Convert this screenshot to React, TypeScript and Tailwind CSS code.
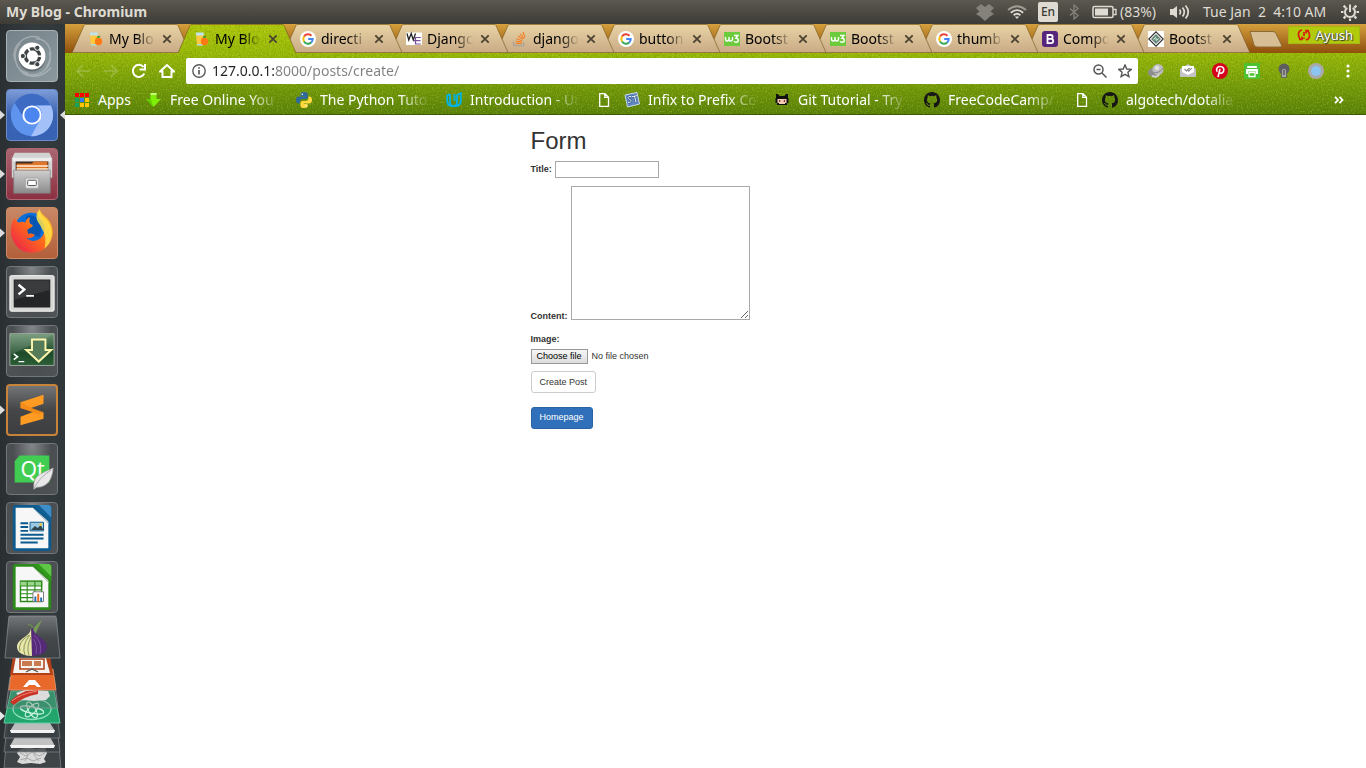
import React from "react";

/* ---------- textures ---------- */

function Noise({ id, frequency, strength }: { id: string; frequency: string; strength: number }) {
  const matrix = `0 0 0 0 0.12  0 0 0 0 0.2  0 0 0 0 0  ${strength} 0 0 0 ${-strength * 0.5}`;
  const light = `0 0 0 0 0.8  0 0 0 0 0.9  0 0 0 0 0.1  0 ${strength} 0 0 ${-strength * 0.5}`;
  return (
    <svg className="pointer-events-none absolute inset-0 h-full w-full" aria-hidden="true">
      <filter id={`${id}-dark`} x="0" y="0" width="100%" height="100%">
        <feTurbulence type="fractalNoise" baseFrequency={frequency} numOctaves="1" seed="4" />
        <feColorMatrix values={matrix} />
      </filter>
      <filter id={`${id}-light`} x="0" y="0" width="100%" height="100%">
        <feTurbulence type="fractalNoise" baseFrequency={frequency} numOctaves="1" seed="9" />
        <feColorMatrix values={light} />
      </filter>
      <rect width="100%" height="100%" filter={`url(#${id}-dark)`} />
      <rect width="100%" height="100%" filter={`url(#${id}-light)`} opacity="0.6" />
    </svg>
  );
}

/* ---------- favicons ---------- */

const Juice = () => (
  <svg viewBox="0 0 16 16" className="size-4">
    <path d="M2 3h7.500l-.8 11.500H3z" fill="#ffc83d" />
    <path d="M1.800 1.500h8l-.2 3H2.200z" fill="#bfe3ee" />
    <path d="M3 14.500h5.800V13H2.900z" fill="#a9d8e6" />
    <circle cx="10.500" cy="10.500" r="3.700" fill="#ff7a14" />
    <path d="M8.500 6.500c1-2 3-2 4-1-1 1.500-2.500 1.800-4 1z" fill="#3f9b2f" />
  </svg>
);
const Google = () => (
  <svg viewBox="0 0 16 16" className="size-4">
    <circle cx="8" cy="8" r="8" fill="#fff" />
    <g fill="none" strokeWidth="2">
      <path d="M11.500 4.700A4.700 4.700 0 0 0 4 5.500" stroke="#ea4335" />
      <path d="M4 5.500a4.800 4.800 0 0 0 0 5" stroke="#fbbc05" />
      <path d="M4 10.500a4.700 4.700 0 0 0 7.200.9" stroke="#34a853" />
      <path d="M11.200 11.400A4.600 4.600 0 0 0 12.700 8H8.200" stroke="#4285f4" />
    </g>
  </svg>
);
const WE = () => (
  <svg viewBox="0 0 16 16" className="size-4">
    <path fill="#fff" d="M0 1.500h16v12.500H0z" />
    <path d="M1 2.500l1.800 6.500 2.400-6.500L7.300 9l2.200-6.500" fill="none" stroke="#222" strokeWidth="1.300" />
    <path d="M14.800 6.500H9.500V13h5.300M8 9.700h6.500" fill="none" stroke="#7a4f9c" strokeWidth="1.200" />
  </svg>
);
const Stack = () => (
  <svg viewBox="0 0 16 16" className="size-4">
    <path d="M1.500 10.500v4h10v-4" fill="none" stroke="#aaa39a" strokeWidth="1.300" />
    <path d="M3.500 12.500h6.200M3.700 10.300l6 .8M4.500 7.700l5.700 2M6 5l5 3.300M8.200 2.800l3.700 4.700M11 1l2 5.700" stroke="#f48024" strokeWidth="1.200" />
  </svg>
);
const W3 = () => (
  <svg viewBox="0 0 16 16" className="size-4">
    <path fill="#6ccb3c" d="M0 1h16v14H0z" />
    <path d="M1.500 6v2q0 2 1.700 2T5 8V6v2q0 2 1.700 2T8.500 8V6M10 4.500h4L12 7.200q2.300.1 2.300 2T12 11.300q-1.500 0-2-1" fill="none" stroke="#fff" strokeWidth="1.400" />
  </svg>
);
const BootstrapIcon = () => (
  <svg viewBox="0 0 16 16" className="size-4">
    <rect width="16" height="16" rx="3" fill="#56257c" />
    <path d="M5.500 4h3.200a1.900 1.900 0 0 1 0 3.900H5.500zm0 3.900h3.600a2.100 2.100 0 0 1 0 4.200H5.500z" fill="none" stroke="#fff" strokeWidth="1.800" />
  </svg>
);
const Diamond = () => (
  <svg viewBox="0 0 16 16" className="size-4">
    <path fill="#fff" d="M0 0h16v16H0z" />
    <path d="M8 .8L15.200 8 8 15.200.8 8z" fill="none" stroke="#333" strokeWidth="1.200" />
    <path d="M8 3.500L12.500 8 8 12.500 3.500 8z" fill="#6b9480" stroke="#444" strokeWidth=".6" />
    <path d="M5.500 8.500l2-2 1 3 2-2" fill="none" stroke="#d5eadf" />
  </svg>
);

/* ---------- bookmark icons ---------- */

const appColors = ["#f00", "#f00", "#f00", "#19a15f", "#2f7cf6", "#ffc600", "#19a15f", "#ffc600", "#ffc600"];
const AppsIcon = () => (
  <svg viewBox="0 0 16 16" className="size-4">
    {appColors.map((c, i) => (
      <rect key={i} x={1 + (i % 3) * 5} y={1 + Math.floor(i / 3) * 5} width="4" height="4" fill={c} />
    ))}
  </svg>
);
const DownIcon = () => (
  <svg viewBox="0 0 16 16" className="size-4">
    <path d="M4.500 1h6v6h4.500l-7.500 8L0 7h4.500z" fill="#7fee08" />
    <path d="M4.500 1h6v2h-6z" fill="#c6ff77" />
    <path d="M7.500 15L0 7h4.500" fill="#5ecb00" />
  </svg>
);
const Python = () => (
  <svg viewBox="0 0 16 16" className="size-4">
    <path d="M8 0C5 0 4.500 1 4.500 2.300V4h4v.6H2.600C1 4.600 0 5.800 0 8s1 3.600 2.300 3.600h1.500V9.500C3.800 8 5 7 6.300 7h3.500c1.200 0 2-1 2-2.100V2.300C11.800.8 10.500 0 8 0z" fill="#2f689d" />
    <path d="M8.200 16c3 0 3.500-1 3.500-2.300V12h-4v-.6h5.800c1.600 0 2.500-1.200 2.500-3.400s-1-3.600-2.200-3.600h-1.400v2.100C12.400 8 11.200 9 9.900 9H6.400c-1.200 0-2 1-2 2.100v2.600c0 1.500 1.300 2.300 3.800 2.300z" fill="#ffd93e" />
    <circle cx="6.300" cy="2.200" r=".8" fill="#fff" />
    <circle cx="10" cy="13.800" r=".8" fill="#fff" />
  </svg>
);
const Udacity = () => (
  <svg viewBox="0 0 16 16" className="size-4" fill="none" stroke="#02b3e4" strokeWidth="1.900">
    <path d="M4 2L1.200 3.500v5.200c0 3 1.800 5.300 5 5.300M4 2v8c0 2.500 1.200 4 3.300 4s3.700-1.600 3.700-4V3.200l3.800-2V9c0 3.300-2.500 5-6.500 5.200" />
    <path d="M8.500 2v7" />
  </svg>
);
const FileIcon = () => (
  <svg viewBox="0 0 16 16" className="size-4" fill="none" stroke="#fff" strokeWidth="1.300">
    <path d="M3.700 1.700H9l3.500 3.500v9.100H3.700zM8.800 1.700v3.700h3.700" />
  </svg>
);
const STIcon = () => (
  <svg viewBox="0 0 16 16" className="size-4">
    <path d="M1 3l12-2.500 2.500 11.500-12 3z" fill="#5f87bd" stroke="#c8d7ea" />
    <path d="M7 4.500C3.500 4 3 6.500 5.500 7.300S7.500 11 4 10.300M8 4.500l5-.8M10.500 4.200L12 10" fill="none" stroke="#254a86" strokeWidth="2" />
    <path d="M7 4.500C3.500 4 3 6.500 5.500 7.300S7.500 11 4 10.300M8 4.500l5-.8M10.500 4.200L12 10" fill="none" stroke="#fff" />
  </svg>
);
const Octocat = () => (
  <svg viewBox="0 0 16 16" className="size-4">
    <path d="M2 2h2l1.500 2h5L12 2h2v4h.5v5H13v2H3v-2H1.500V6H2z" fill="#111" />
    <path d="M3.500 7h9v4h-1.500v1H5v-1H3.500z" fill="#f4cbb2" />
    <path d="M5 8h1.200v2H5zM9.800 8H11v2H9.800z" fill="#6d3b2f" />
  </svg>
);
const GitHub = () => (
  <svg viewBox="0 0 16 16" className="size-4">
    <path
      fill="#161616"
      d="M8 0C3.580 0 0 3.580 0 8c0 3.540 2.290 6.530 5.470 7.590.4.070.55-.17.55-.38 0-.19-.01-.82-.01-1.490-2.010.37-2.530-.49-2.690-.94-.09-.23-.48-.94-.82-1.130-.28-.15-.68-.52-.01-.53.63-.01 1.080.58 1.230.82.72 1.210 1.870.87 2.330.66.07-.52.28-.87.51-1.070-1.780-.2-3.640-.89-3.640-3.950 0-.87.31-1.590.82-2.150-.08-.2-.36-1.020.08-2.120 0 0 .67-.21 2.200.82a7.600 7.600 0 0 1 4 0c1.530-1.040 2.200-.82 2.200-.82.44 1.100.16 1.920.08 2.120.51.56.82 1.270.82 2.150 0 3.070-1.870 3.750-3.650 3.950.29.25.54.73.54 1.480 0 1.070-.01 1.930-.01 2.200 0 .21.15.46.55.38A8 8 0 0 0 16 8c0-4.420-3.580-8-8-8z"
    />
  </svg>
);

/* ---------- browser data ---------- */

const tabs: { label: string; icon: () => React.ReactElement; active?: boolean; layer: string }[] = [
  { label: "My Blog", icon: Juice, layer: "z-[11]" },
  { label: "My Blog", icon: Juice, active: true, layer: "z-20" },
  { label: "directi", icon: Google, layer: "z-10" },
  { label: "Django", icon: WE, layer: "z-[9]" },
  { label: "django", icon: Stack, layer: "z-[8]" },
  { label: "button", icon: Google, layer: "z-[7]" },
  { label: "Bootst", icon: W3, layer: "z-[6]" },
  { label: "Bootst", icon: W3, layer: "z-[5]" },
  { label: "thumb", icon: Google, layer: "z-[4]" },
  { label: "Compo", icon: BootstrapIcon, layer: "z-[3]" },
  { label: "Bootst", icon: Diamond, layer: "z-[2]" },
];

const bookmarks: { label?: string; icon: () => React.ReactElement }[] = [
  { label: "Free Online You", icon: DownIcon },
  { label: "The Python Tuto", icon: Python },
  { label: "Introduction - Uc", icon: Udacity },
  { icon: FileIcon },
  { label: "Infix to Prefix Co", icon: STIcon },
  { label: "Git Tutorial - Try", icon: Octocat },
  { label: "FreeCodeCamp/", icon: GitHub },
  { icon: FileIcon },
  { label: "algotech/dotalia", icon: GitHub },
];

function Tab({ tab }: { tab: (typeof tabs)[number] }) {
  const Icon = tab.icon;
  return (
    <li className={`relative -mr-3 flex h-[29px] w-[118px] shrink-0 items-center pl-4 ${tab.layer}`}>
      <svg className="absolute inset-0 h-full w-full" viewBox="0 0 118 29" aria-hidden="true">
        <path d="M0 29L12 1.500Q12.500.5 14 .5H104Q105.500.5 106 1.500L118 29z" fill={tab.active ? "url(#tab-on)" : "url(#tab-off)"} />
        {tab.active && (
          <g clipPath="url(#tab-clip)">
            <rect width="118" height="29" filter="url(#toolbar-dark)" />
            <rect width="118" height="29" filter="url(#toolbar-light)" opacity="0.6" />
          </g>
        )}
        <path
          d={tab.active ? "M0 29L12 1.500Q12.500.5 14 .5H104Q105.500.5 106 1.500L118 29" : "M0 28.500L12 1.500Q12.500.5 14 .5H104Q105.500.5 106 1.500L118 28.500z"}
          fill="none"
          stroke="#7a5a20"
          strokeOpacity=".65"
        />
      </svg>
      <a href="#tab" className="relative flex items-center gap-[5px] text-black">
        <Icon />
        <span className="w-[46px] overflow-hidden whitespace-nowrap text-[14px] leading-5 [mask-image:linear-gradient(to_right,black_60%,transparent)]">{tab.label}</span>
      </a>
      <button aria-label="Close tab" className="relative ml-[7px]">
        <svg viewBox="0 0 10 10" className="size-[10px]" stroke="#4c4433" strokeWidth="1.800">
          <path d="M1.300 1.300l7.400 7.400M8.700 1.300L1.300 8.700" />
        </svg>
      </button>
    </li>
  );
}

/* ---------- system bar ---------- */

function SystemBar() {
  return (
    <header className="flex h-6 items-center bg-linear-to-b from-[#5b5850] to-[#3e3c37] pr-[7px] pl-[6px] text-[14px] leading-5 whitespace-nowrap text-[#dfdbd2]">
      <h1 className="flex-1 text-[14px] font-bold">My Blog - Chromium</h1>
      <svg viewBox="0 0 18 17" className="h-[17px] w-[18px]" fill="#85827b">
        <path d="M5 0l4 3 4-3 5 4-3.500 3.500L18 10l-4 2.500L9 17l-5-4.500L0 10l3.500-2.500L0 4z" />
      </svg>
      <svg viewBox="0 0 20 14" className="ml-[13px] h-[14px] w-5" fill="none" stroke="#dfdbd2" strokeWidth="1.800">
        <path d="M1 5Q10-2.500 19 5" strokeOpacity=".55" />
        <path d="M3.800 7.800q6.200-5.300 12.400 0M6.600 10.200q3.400-2.800 6.800 0" />
        <path d="M7.800 11.400h4.400L10 14z" fill="#dfdbd2" stroke="none" />
      </svg>
      <span className="ml-[11px] flex size-5 items-center justify-center rounded-xs bg-[#dfdbd2] text-[12px] font-medium text-[#3c3b37]">En</span>
      <svg viewBox="0 0 10 16" className="ml-[11px] h-4 w-[10px]" fill="none" stroke="#85827b" strokeWidth="1.300">
        <path d="M1 4.500l8 7L5 15V1l4 3.500-8 7" />
      </svg>
      <svg viewBox="0 0 25 14" className="ml-[13px] h-[14px] w-[25px]">
        <rect x="1" y="1.500" width="20" height="11" rx="1.500" fill="none" stroke="#dfdbd2" strokeWidth="1.500" />
        <path d="M3 3.500h13v7H3z" fill="#dfdbd2" />
        <path d="M22 4.500h2v5h-2" fill="none" stroke="#dfdbd2" strokeWidth="1.300" />
      </svg>
      <span className="ml-[3px] w-[39px]">(83%)</span>
      <svg viewBox="0 0 20 16" className="ml-[11px] h-4 w-5" fill="none" stroke="#dfdbd2" strokeWidth="1.700">
        <path d="M0 5h3l4-3v12l-4-3H0z" fill="#dfdbd2" stroke="none" />
        <path d="M9.500 5.500q2 2.500 0 5M12.500 3.500q3.600 4.500 0 9M15.500 1.500q5.500 6.500 0 13" />
      </svg>
      <time className="ml-[13px] w-[126px] whitespace-pre">Tue Jan  2  4:10 AM</time>
      <svg viewBox="0 0 18 18" className="ml-3 size-[18px]" fill="none" stroke="#dfdbd2">
        <path d="M6.300 4.800a5 5 0 1 0 5.400 0" strokeWidth="2" />
        <path d="M9 1.500V9" strokeWidth="2" />
        <path d="M0 9h2.500M15.500 9H18M2.600 2.600l2 2M13.400 4.600l2-2M2.600 15.400l2-2M13.400 13.400l2 2M9 15.500V18" strokeWidth="2.200" />
      </svg>
    </header>
  );
}

/* ---------- launcher ---------- */

const Ubuntu = () => (
  <svg viewBox="0 0 52 52" className="size-full">
    <g fill="none" stroke="#fff" strokeOpacity=".28" strokeWidth="1.500">
      <path d="M8 30C4 14 20 2 34 7M44 22c5 15-10 28-25 22M30 8c14 0 20 16 11 30M22 44C8 42 4 24 14 12M12 38C16 48 34 52 46 38" />
    </g>
    <circle cx="26" cy="28" r="14" fill="#000" opacity=".25" />
    <circle cx="26" cy="26" r="14" fill="#fff" />
    <circle cx="26.500" cy="26" r="7.500" fill="none" stroke="#3e4346" strokeWidth="3.400" strokeDasharray="13.700 2" strokeDashoffset="-1" />
    <g fill="#3e4346" stroke="#fff" strokeWidth="1">
      <circle cx="16.500" cy="26" r="2.700" />
      <circle cx="31.500" cy="17.400" r="2.700" />
      <circle cx="31.500" cy="34.600" r="2.700" />
    </g>
  </svg>
);
const Chromium = () => (
  <svg viewBox="0 0 52 52" className="size-full">
    <circle cx="26" cy="26" r="22" fill="#5e93ee" />
    <path d="M26 4a22 22 0 0 1 19.500 12H26a10 10 0 0 0-9 6l1 8L8 13.500A22 22 0 0 1 26 4z" fill="#3d6bc4" />
    <path d="M45.500 16A22 22 0 0 1 25 48l9.500-17a10 10 0 0 0-4.500-15z" fill="#a3c1f8" />
    <circle cx="26" cy="26" r="10" fill="#fff" />
    <circle cx="26" cy="26" r="8" fill="#4a86ee" />
  </svg>
);
const Files = () => (
  <svg viewBox="0 0 52 52" className="size-full">
    <path d="M8 4h36l3 6v20H5V10z" fill="#d2d2d2" />
    <path d="M6 9h40v4H6z" fill="#ececec" />
    <path d="M9 13h34v11H9z" fill="#3d2b22" />
    <path d="M10 15h16l2-2h14v11H10z" fill="#e0752c" />
    <path d="M10 17h33v1.500H10zM10 20h33v1.500H10z" fill="#fff0d8" />
    <path d="M7 22h38v24H7z" fill="url(#steel)" stroke="#7d7d7d" strokeWidth=".7" />
    <rect x="19" y="30" width="14" height="11" rx="2" fill="#e0e0e0" stroke="#a0a0a0" />
    <rect x="21.500" y="32.500" width="9" height="5.500" rx="1" fill="#fff" stroke="#555" />
  </svg>
);
const Firefox = () => (
  <svg viewBox="0 0 52 52" className="size-full">
    <circle cx="25" cy="22" r="17" fill="#0a6fd8" />
    <path d="M20 8q10-2 17 8l-3 14-12-2-3-10z" fill="#0856b4" />
    <path
      d="M8 10c1 3 2 4 4 5 2-1 5-1 7 0 1-3 3-5 5-5-1 2-1 4 0 6l3 2c-1 3-5 3-6 5l1 4c3-1 5 0 7 1-2 3-6 4-9 3 6 6 15 3 18-4 3-7 0-13-5-17-2-3-2-6 1-9 1 6 8 8 11 14 5 9 3 20-6 27-11 8-26 5-32-7C2 26 4 17 8 10z"
      fill="url(#fox)"
    />
    <path d="M34 2c1 6 7 8 10 14 5 9 3 20-5 26 2-9 1-15-3-21-1-3-4-6-5-9-1-4 0-8 3-10z" fill="#ffe14a" opacity=".85" />
  </svg>
);
const Terminal = () => (
  <svg viewBox="0 0 52 52" className="size-full">
    <rect x="3" y="9" width="46" height="37" rx="1.500" fill="#d6d6d4" stroke="#fafafa" />
    <path d="M7 13h38v29H7z" fill="#242526" />
    <path d="M8 14h36v10L8 34z" fill="#fff" opacity=".1" />
    <path d="M12 18.500l6 5-6 5" fill="none" stroke="#fff" strokeWidth="2.500" />
    <path d="M20 30h8" stroke="#fff" strokeWidth="2" />
  </svg>
);
const Install = () => (
  <svg viewBox="0 0 52 52" className="size-full">
    <path d="M3 8h46v33H3z" fill="url(#forest)" stroke="#b8c2b8" strokeWidth=".8" />
    <path d="M4 9h44L4 30z" fill="#fff" opacity=".13" />
    <path d="M7 29l4 3-4 3" fill="none" stroke="#fff" strokeWidth="1.600" />
    <path d="M12 37h6" stroke="#fff" strokeWidth="1.300" />
    <path d="M26 14h14v11h6L33 37 20 25h6z" fill="#567b59" stroke="#fff6ad" strokeWidth="2" />
  </svg>
);
const Sublime = () => (
  <svg viewBox="1 1 50 50" className="size-full">
    <path d="M14 18l24-8v9.500L25 24l13 4.500v6.500l-24 7v-9l13-5-13-4z" fill="#ff9a22" />
    <path d="M14 18v6l18 6.500 6-2v-.5l-12-4z" fill="#e87f10" opacity=".55" />
  </svg>
);
const Qt = () => (
  <svg viewBox="0 0 52 52" className="size-full">
    <path d="M13 12h31v28H8V18z" fill="#41cd52" />
    <text x="14" y="34" fontFamily="Noto Sans, sans-serif" fontSize="22" fill="#fff">Qt</text>
    <path d="M28 47c-1-14 5-15 20-22-1 12-6 20-17 20z" fill="#e8e8e8" stroke="#a5a5a5" strokeWidth=".7" />
    <path d="M28 47c4-9 9-14 18-20" fill="none" stroke="#aaa" />
  </svg>
);
const Doc = ({ green }: { green?: boolean }) => (
  <svg viewBox="0 0 52 52" className="size-full">
    <path d="M8 2h36l2 2v44l-2 2H8l-2-2V4z" fill={green ? "#2c8a1b" : "#0d5a8f"} />
    <path d="M9 5h18l16 16v26H9z" fill="#f7f7f7" />
    <path d="M27 5v0l16 16V19z" fill="#cfcfcf" />
    <path d="M28 2h16l2 2v16z" fill={green ? "#2f9a1c" : "#125f94"} />
    <path d="M33 2h11l2 2v11z" fill={green ? "#5fc545" : "#3d8dc8"} />
    {green ? (
      <>
        <path d="M14 20h22v21H14z" fill="#fff" stroke="#2c8a1b" strokeWidth="1.500" />
        <path d="M14 20h22v5H14z" fill="#9bd48c" />
        <path d="M14 20h22v5H14M14 25h22M14 29h22M14 33h22M14 37h22M21 20v21M29 20v21" fill="none" stroke="#2c8a1b" strokeWidth="1.200" />
        <path d="M27 31h11v10H27z" fill="#fff" stroke="#777" />
        <path d="M28.500 36h2v5h-2z" fill="#2370b8" />
        <path d="M31.500 33h2v8h-2z" fill="#e66a26" />
        <path d="M34.500 37h2v4h-2z" fill="#2370b8" />
      </>
    ) : (
      <>
        <path d="M14 21h8M14 25h8M14 29h8M14 33h24M14 37h24M14 41h18" stroke="#0d5a8f" strokeWidth="2" />
        <path d="M24 20h14v9H24z" fill="#9bc9e5" stroke="#0d5a8f" />
        <path d="M25 28l4-4 3 2 3-3 3 5z" fill="#31444f" />
        <circle cx="35" cy="22.500" r="1.500" fill="#f2c73a" />
      </>
    )}
  </svg>
);
const Calc = () => <Doc green />;

const graphite = "border-[#73777b] bg-[radial-gradient(ellipse_at_50%_0%,#85888b,#4b4e51_55%,#505356)]";
const launchers: { name: string; icon: () => React.ReactElement; tile: string; running?: boolean; focused?: boolean }[] = [
  { name: "Search", icon: Ubuntu, tile: "border-[#a9b2b6] bg-linear-to-br from-[#758289] to-[#8b989e]" },
  { name: "Chromium", icon: Chromium, tile: "border-[#6d8ccb] bg-linear-to-b from-[#7d9bd8] via-[#3a62b0] to-[#3763b5]", running: true, focused: true },
  { name: "Files", icon: Files, tile: "border-[#b06873] bg-linear-to-b from-[#a96671] to-[#8b3042]", running: true },
  { name: "Firefox", icon: Firefox, tile: "border-[#cf8b67] bg-linear-to-b from-[#c98866] to-[#b2603a]", running: true },
  { name: "Terminal", icon: Terminal, tile: graphite },
  { name: "Installer", icon: Install, tile: graphite },
  { name: "Editor", icon: Sublime, tile: "border-2 border-[#c8833b] bg-linear-to-b from-[#737475] via-[#454647] to-[#3d3e3f]", running: true },
  { name: "Qt", icon: Qt, tile: graphite },
  { name: "Writer", icon: () => <Doc />, tile: graphite },
  { name: "Calc", icon: Calc, tile: graphite },
];

/* Folded tiles at the foot of the launcher, each drawn behind the one above it. */
function FoldedTiles() {
  return (
    <svg viewBox="0 0 65 155" className="block h-[155px] w-full" aria-hidden="true">
      <path d="M7 122h51l3 33H4z" fill="#3f4447" stroke="#83888b" strokeOpacity=".7" />
      <path d="M19 137l8-3 9 2 9-1 2 5-3 6 2 3-6 2-9-1-9 1-5-2 3-5-3-4z" fill="#dadada" />
      <path d="M20 140l6 3 6-4 7 4 6-3M20 147l7-2 6 3 8-3M24 137l4 5-3 6M36 136l-2 6 5 6" fill="none" stroke="#a8a8a8" />
      <path d="M8 108h48l4 31H4z" fill="#3a3f42" fillOpacity=".8" stroke="#83888b" strokeOpacity=".7" />
      <path d="M15 124h35l5 9H10z" fill="#c2c2c2" />
      <path d="M10 132h45l-1 3H11z" fill="#f3f3f3" />
      <path d="M8 94h48l4 31H4z" fill="#3a3f42" fillOpacity=".8" stroke="#83888b" strokeOpacity=".7" />
      <path d="M15 110h35l5 8H10z" fill="#bcbcbc" />
      <path d="M10 117h45l-1 3H11z" fill="#f3f3f3" />
      <path d="M11 78h43l6 32H4z" fill="#22a46c" stroke="#5ad2a1" />
      <ellipse cx="32" cy="96" rx="19" ry="10.500" fill="none" stroke="#8ce0bd" strokeWidth="1.300" />
      <g fill="none" stroke="#d0f5e5" strokeWidth="1.100">
        <ellipse cx="32" cy="97" rx="12" ry="3.200" transform="rotate(12 32 97)" />
        <ellipse cx="32" cy="97" rx="9" ry="3.500" transform="rotate(60 32 97)" />
        <ellipse cx="32" cy="97" rx="9" ry="3.500" transform="rotate(-45 32 97)" />
      </g>
      <path d="M10 64h44l4 31H6z" fill="#686c6e" fillOpacity=".35" stroke="#91979a" strokeOpacity=".7" />
      <path d="M16 80l12-4 6 1 14 1 2 5-4 4-12 1-12-1z" fill="#dcdcdc" />
      <path d="M10 89q4-6 16-11l12-1v4Q22 84 14 92z" fill="#c93424" />
      <path d="M12 88q8-7 25-10" fill="none" stroke="#f18577" />
      <path d="M12 56h41l3 21H9z" fill="#e9692c" stroke="#f09a6b" strokeWidth=".7" />
      <path d="M23 74l6-7h6l6 7h-4l-2-2h-6l-2 2z" fill="#fff" />
      <path d="M14 36h35l4 26H10z" fill="#b24018" />
      <path d="M17 38h27l6 22H13z" fill="#f6f2ef" />
      <path d="M20 46h24v10H20z" fill="none" stroke="#b24018" strokeWidth="1.500" />
      <path d="M22 48h10v5H22zM34 48h7v5h-7z" fill="#c87b50" />
      <path d="M26 59l6-3 6 3" fill="none" stroke="#555" strokeWidth="1.200" />
      <path d="M10 3h45q1 0 1.200 1L60 45H5L8.800 4Q9 3 10 3z" fill="url(#plate)" stroke="#9a9fa2" strokeOpacity=".6" />
      <path d="M31 23c1-7 4-10 11-16-3 6-5 10-7 16z" fill="#779a57" />
      <path d="M33 15q-1-3-5-4" fill="none" stroke="#69884e" strokeWidth="1.500" />
      <path d="M32 15c0 9-15 10-15 19 0 6 7 9 15 9s15-3 15-9c0-9-13-10-14-19z" fill="#542a79" />
      <path d="M31 15c0 9-14 10-14 19 0 6 7 9 15 9z" fill="#e7e7a9" />
      <path d="M30 22q-9 11-5 20M31 24q-5 10-2 18M29 22q-12 8-9 16" fill="none" stroke="#8d955b" />
      <path d="M34 22q9 8 6 19M34 26q4 8 2 15" fill="none" stroke="#7f50a4" />
      <path d="M0 98.500l5 4.500-5 4.500z" fill="#e5e5e5" />
    </svg>
  );
}

function Launcher() {
  return (
    <nav aria-label="Launcher" className="w-[65px] shrink-0 overflow-hidden bg-linear-to-r from-[#2a2f32] via-[#353c3f] to-[#30373a]">
      <ul className="flex flex-col gap-[7px] pt-[6px]">
        {launchers.map(({ name, icon: Icon, tile, running, focused }) => (
          <li key={name} className="flex items-center">
            <span className="w-[6px]">
              {running && (
                <svg viewBox="0 0 6 10" className="h-[10px] w-[6px]" fill="#dcdcdc">
                  <path d="M0 .5L5 5 0 9.500z" />
                </svg>
              )}
            </span>
            <button aria-label={name} className={`size-[52px] overflow-hidden rounded-[4px] border ${tile}`}>
              <Icon />
            </button>
            <span className="flex flex-1 justify-end">
              {focused && (
                <svg viewBox="0 0 6 10" className="h-[10px] w-[6px]" fill="#dcdcdc">
                  <path d="M6 .5L1 5l5 4.500z" />
                </svg>
              )}
            </span>
          </li>
        ))}
      </ul>
      <FoldedTiles />
    </nav>
  );
}

/* ---------- toolbar ---------- */

const NavIcon = ({ d, faded }: { d: string; faded?: boolean }) => (
  <svg viewBox="0 0 16 16" className="size-4" fill="none" stroke="#fff" strokeWidth={faded ? 1.5 : 2} strokeOpacity={faded ? 0.22 : 1}>
    <path d={d} />
  </svg>
);

const extensions: { name: string; art: React.ReactElement }[] = [
  {
    name: "Globe",
    art: (
      <>
        <ellipse cx="6" cy="9.500" rx="6" ry="4.500" fill="#8e8e8e" />
        <circle cx="10" cy="6.500" r="5.500" fill="#bdbdbd" />
        <path d="M4 13q6 2 7-2" fill="none" stroke="#d0d0d0" strokeWidth="2" />
        <path d="M5 9.500Q11 11 15 5" fill="none" stroke="#8a8a8a" />
        <circle cx="9" cy="5" r="2.300" fill="#e0e0e0" />
      </>
    ),
  },
  {
    name: "Mail",
    art: (
      <>
        <path d="M0 6l8-5 8 5v8H0z" fill="#c3c3c3" />
        <path d="M2 3h12v6l-6 3-6-3z" fill="#fff" />
        <path d="M4.500 6l2 2 3-3M8 7.500l.7.700 3-3" fill="none" stroke="#888" strokeWidth="1.200" />
      </>
    ),
  },
  {
    name: "Pinterest",
    art: (
      <>
        <circle cx="8" cy="8" r="8" fill="#d6001c" />
        <path d="M6 14l2-8M5.300 8.800C3.500 6.500 5 3.500 8.200 3.500c3 0 4.200 2.300 3.400 4.600-.7 2.200-3.200 2.800-4.100 1.200" fill="none" stroke="#fff" strokeWidth="1.600" />
      </>
    ),
  },
  {
    name: "Print",
    art: (
      <>
        <rect width="16" height="16" rx="1" fill="#4cc22f" />
        <path d="M3 3h10v2H3zM2 6h12v5h-2V8.500H4V11H2z" fill="#fff" />
        <path d="M5 9.500h6v4H5z" fill="none" stroke="#fff" strokeWidth="1.300" />
      </>
    ),
  },
  {
    name: "Lamp",
    art: (
      <>
        <circle cx="8" cy="6" r="5.500" fill="#5e5e5e" />
        <path d="M5.500 8a2.500 2.500 0 1 1 5 0v6.500h-5z" fill="#a8a8a8" stroke="#555" strokeWidth=".7" />
        <path d="M7.300 7h1.400v5H7.300z" fill="#555" />
      </>
    ),
  },
  {
    name: "Record",
    art: (
      <>
        <circle cx="8" cy="8" r="8" fill="#a9aaa8" />
        <circle cx="8" cy="8" r="5" fill="#8cc5f1" />
      </>
    ),
  },
];

function BrowserChrome() {
  return (
    <div>
      <div className="relative flex h-[29px] items-start overflow-hidden bg-linear-to-b from-[#d5a03c] to-[#8e500b] pl-[7px]">
        <ul className="flex">
          {tabs.map((tab, i) => (
            <Tab key={i} tab={tab} />
          ))}
        </ul>
        <button aria-label="New tab" className="mt-[7px] ml-[11px]">
          <svg viewBox="0 0 34 17" className="h-[17px] w-[34px]">
            <path d="M1 .5h23q2 0 3 2l5.500 11.500q1 2-1.500 2H8q-2 0-3-2z" fill="#d8be94" stroke="#8b6a35" />
          </svg>
        </button>
        <span className="flex-1" />
        <button className="relative mt-[2px] mr-[6px] flex h-[18px] w-[72px] items-center justify-between border border-[#a6b715] bg-[#b2ca0c] pr-[6px] pl-2 text-[13px] leading-4 text-white [text-shadow:1px_1px_1px_#333,-1px_0_1px_#555]">
          <svg viewBox="0 0 14 12" className="h-3 w-[14px]" fill="none" stroke="#d8190b" strokeWidth="1.700">
            <path d="M5 1Q1 2 1.500 6t3 4.500M2 10.500h3v-3M9 11q4-1 3.500-5t-3-4.500M12 1.500H9v3M7 3v4M7 8.500V10" />
          </svg>
          Ayush
        </button>
      </div>

      <div className="relative border-b border-[#3c5a06] bg-linear-to-b from-[#97b808] via-[#759c0a] to-[#577f08]">
        <Noise id="toolbar" frequency="0.8 0.55" strength={1.5} />
        <div className="relative flex h-[34px] items-center pt-px pr-4 pl-[10px]">
          <div className="flex gap-3">
            <button aria-label="Back"><NavIcon faded d="M15 8H2M8 2L2 8l6 6" /></button>
            <button aria-label="Forward"><NavIcon faded d="M1 8h13M8 2l6 6-6 6" /></button>
            <button aria-label="Reload"><NavIcon d="M13.300 10.500a6 6 0 1 1-.8-6.500M14 1v5.500H8.500" /></button>
            <button aria-label="Home"><NavIcon d="M1 8.500L8 2l7 6.500h-2.500V14h-9V8.500z" /></button>
          </div>
          <div className="mr-[10px] ml-[11px] flex h-[26px] flex-1 items-center rounded-xs bg-white px-[6px]">
            <svg viewBox="0 0 14 14" className="size-[14px]" fill="none" stroke="#5a5a5a" strokeWidth="1.400">
              <circle cx="7" cy="7" r="6.200" />
              <path d="M7 6v4.500M7 3.300v1.500" strokeWidth="1.700" />
            </svg>
            <input
              aria-label="Address"
              defaultValue="127.0.0.1:8000/posts/create/"
              className="ml-[6px] min-w-0 flex-1 bg-[linear-gradient(to_right,#222_62px,#808080_62px)] bg-clip-text text-[14px] leading-5 text-transparent outline-none"
            />
            <button aria-label="Zoom">
              <svg viewBox="0 0 14 14" className="size-[14px]" fill="none" stroke="#555" strokeWidth="1.500">
                <circle cx="5.500" cy="5.500" r="4.500" />
                <path d="M9 9l4.500 4.500M3.500 5.500h4" />
              </svg>
            </button>
            <button aria-label="Bookmark" className="ml-[11px]">
              <svg viewBox="0 0 14 14" className="size-[14px]" fill="none" stroke="#555" strokeWidth="1.400">
                <path d="M7 1l1.800 4 4.400.4-3.300 2.900 1 4.300L7 10.300l-3.900 2.300 1-4.300L.8 5.400 5.200 5z" />
              </svg>
            </button>
          </div>
          <div className="flex items-center gap-4">
            {extensions.map((e) => (
              <button key={e.name} aria-label={e.name}>
                <svg viewBox="0 0 16 16" className="size-4">{e.art}</svg>
              </button>
            ))}
          </div>
          <button aria-label="Menu" className="ml-[22px]">
            <svg viewBox="0 0 4 14" className="h-[14px] w-1" fill="#fff">
              <circle cx="2" cy="2" r="1.600" />
              <circle cx="2" cy="7" r="1.600" />
              <circle cx="2" cy="12" r="1.600" />
            </svg>
          </button>
        </div>

        <div className="relative flex h-[27px] items-center overflow-hidden pb-[2px] pl-[9px] text-[14px] leading-5 whitespace-nowrap text-white">
          <a href="#apps" className="flex w-[72px] shrink-0 items-center gap-2">
            <AppsIcon />
            Apps
          </a>
          {bookmarks.map(({ label, icon: Icon }, i) =>
            label ? (
              <a key={i} href="#bookmark" className="flex w-[150px] shrink-0 items-center gap-2">
                <Icon />
                <span className="w-[110px] overflow-hidden [mask-image:linear-gradient(to_right,black_72%,transparent)]">{label}</span>
              </a>
            ) : (
              <a key={i} href="#bookmark" aria-label="Page" className="w-7 shrink-0">
                <Icon />
              </a>
            ),
          )}
          <span className="flex-1" />
          <button aria-label="More bookmarks" className="mr-[22px]">
            <svg viewBox="0 0 10 8" className="h-2 w-[10px]" fill="none" stroke="#fff" strokeWidth="1.800">
              <path d="M1 .8L4 4 1 7.200M5.500.8L8.500 4l-3 3.200" />
            </svg>
          </button>
        </div>
      </div>
    </div>
  );
}

/* ---------- page ---------- */

function PostForm() {
  return (
    <main className="mx-auto grid w-full max-w-[780px] grid-cols-4 font-['Liberation_Sans',Arial,sans-serif] text-[9px] leading-[13px] text-[#333]">
      <div className="col-span-3 col-start-2 px-[10px]">
        <h2 className="mt-[13px] mb-[7px] text-[24px] leading-[26px]">Form</h2>
        <form>
          <div className="mb-2 flex items-center gap-[3px]">
            <label htmlFor="title" className="font-bold">Title:</label>
            <input id="title" type="text" className="h-[17px] w-[104px] border border-[#a9a9a9] px-px" />
          </div>
          <div className="mb-[13px] flex items-end gap-[3px]">
            <label htmlFor="content" className="-mb-[3px] font-bold">Content:</label>
            <textarea id="content" className="h-[134px] w-[179px] resize border border-[#a9a9a9] p-px" />
          </div>
          <div>
            <p className="mb-[3px] font-bold">Image:</p>
            <div className="flex items-center gap-1">
              <label htmlFor="image" className="flex h-[15px] w-[57px] items-center justify-center border border-[#999] bg-linear-to-b from-[#f6f6f6] to-[#dcdcdc] text-black">Choose file</label>
              <input id="image" type="file" className="sr-only" />
              <span>No file chosen</span>
            </div>
          </div>
          <button type="submit" className="mt-[7px] block h-[22px] rounded-[3px] border border-[#ccc] bg-white px-2">Create Post</button>
        </form>
        <a href="#home" className="mt-[14px] inline-block h-[22px] rounded-[3px] border border-[#2b62a5] bg-[#306fb9] px-2 pt-[3px] text-white">Homepage</a>
      </div>
    </main>
  );
}

export default function App() {
  return (
    <div className="flex min-h-screen flex-col bg-white font-['Noto_Sans',sans-serif]">
      <svg className="absolute size-0" aria-hidden="true">
        <defs>
          <linearGradient id="tab-off" x2="0" y2="1">
            <stop stopColor="#e8d3a5" />
            <stop offset="1" stopColor="#c9aa85" />
          </linearGradient>
          <linearGradient id="tab-on" x2="0" y2="1">
            <stop stopColor="#adc70c" />
            <stop offset="1" stopColor="#97b808" />
          </linearGradient>
          <clipPath id="tab-clip">
            <path d="M0 29L12 1h94l12 28z" />
          </clipPath>
          <linearGradient id="steel" x2="0" y2="1">
            <stop stopColor="#cfcfcf" />
            <stop offset="1" stopColor="#8b8b8b" />
          </linearGradient>
          <linearGradient id="fox" x1="1" x2="0" y2="1">
            <stop stopColor="#ffe226" />
            <stop offset=".5" stopColor="#ff6a1a" />
            <stop offset="1" stopColor="#e81656" />
          </linearGradient>
          <linearGradient id="forest" x2="0" y2="1">
            <stop stopColor="#6a9170" />
            <stop offset=".6" stopColor="#1e4b2a" />
            <stop offset="1" stopColor="#2b5e36" />
          </linearGradient>
          <linearGradient id="plate" x2="0" y2="1">
            <stop stopColor="#74777a" />
            <stop offset=".5" stopColor="#45494c" />
            <stop offset="1" stopColor="#3b4043" />
          </linearGradient>
        </defs>
      </svg>
      <SystemBar />
      <div className="flex flex-1">
        <Launcher />
        <div className="min-w-0 flex-1">
          <BrowserChrome />
          <PostForm />
        </div>
      </div>
    </div>
  );
}
